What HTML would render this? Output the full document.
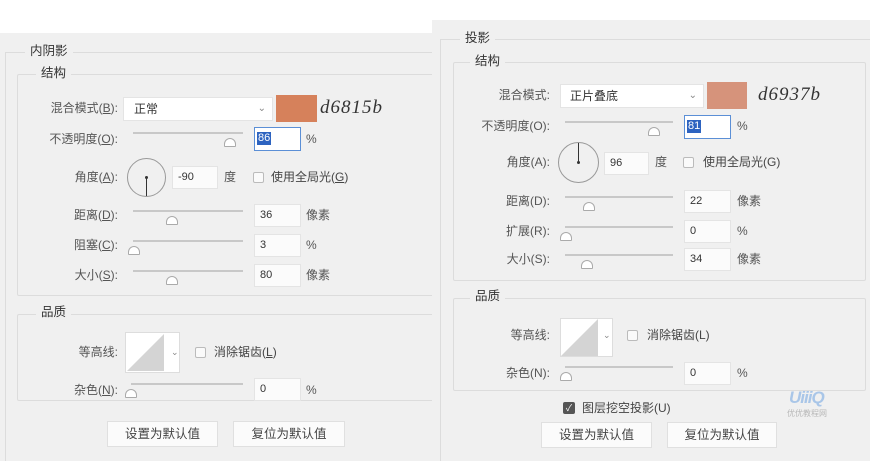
<!DOCTYPE html>
<html style="overflow:hidden;width:870px;height:461px"><head><meta charset="utf-8"><style>
body{margin:0;width:870px;height:461px;background:#fff;position:relative;overflow:hidden;font-family:"Liberation Sans","Noto Sans CJK SC",sans-serif;font-size:12px;color:#444}
div,span{position:absolute;box-sizing:border-box}
.p{background:#f0f0f0}
.fs{border:1px solid #dcdcdc;border-radius:2px}
.lg{background:#f0f0f0;padding:0 5px;color:#333;font-size:12.5px;line-height:16px}
.lb{text-align:right;line-height:16px;white-space:nowrap;color:#555}
.t{line-height:16px;white-space:nowrap;color:#555}
.in{background:#fbfbfb;border:1px solid #e4e4e4;font-size:11px;line-height:20px;padding-left:5px;color:#333}
.sl{height:2px;background:#c8c8c8}
.th{width:0;height:0}
.th::before{content:"";position:absolute;left:-6px;top:0;width:12px;height:9px;background:#fff;border:1px solid #aaa;border-radius:6px 6px 1px 1px;box-sizing:border-box}
.cb{width:11px;height:11px;border:1px solid #bbb;background:#fafafa;border-radius:2px}
.btn{background:#fbfbfb;border:1px solid #e0e0e0;text-align:center;line-height:24px;color:#444;font-size:12.5px}
.hw{font-family:"Liberation Serif",serif;font-style:italic;font-size:19px;color:#333;letter-spacing:1px}
</style></head><body>
<!-- left panel -->
<div class="p" style="left:0;top:33px;width:437px;height:428px"></div>
<div style="left:5px;top:52px;width:432px;height:409px;border-left:1px solid #dcdcdc;border-top:1px solid #dcdcdc"></div>
<div class="lg" style="left:25px;top:43px">内阴影</div>
<div class="fs" style="left:17px;top:74px;width:418px;height:222px"></div>
<div class="lg" style="left:36px;top:65px">结构</div>

<div class="lb" style="right:752px;top:100px">混合模式(<u>B</u>):</div>
<div class="in" style="left:123px;top:97px;width:150px;height:24px;background:#fff;font-size:12px;padding-left:10px;line-height:22px">正常<span style="right:6px;top:0;color:#888;font-size:10px">⌄</span></div>
<div style="left:276px;top:95px;width:41px;height:27px;background:#d6815b"></div>
<div class="hw" style="left:320px;top:97px">d6815b</div>

<div class="lb" style="right:752px;top:131px">不透明度(<u>O</u>):</div>
<div class="sl" style="left:133px;top:132px;width:110px"></div><div class="th" style="left:230px;top:138px"></div>
<div class="in" style="left:254px;top:127px;width:47px;height:24px;border:1px solid #5b8fd6;background:#fff"><span style="left:2px;top:4px;background:#2d63c0;color:#fff;line-height:13px;padding:0 1px">86</span></div>
<div class="t" style="left:306px;top:131px">%</div>

<div class="lb" style="right:752px;top:169px">角度(<u>A</u>):</div>
<div style="left:127px;top:158px;width:39px;height:39px;border:1px solid #999;border-radius:50%"></div>
<div style="left:145px;top:176px;width:3px;height:3px;background:#333;border-radius:50%"></div>
<div style="left:146px;top:177px;width:1px;height:19px;background:#333"></div>
<div class="in" style="left:172px;top:166px;width:46px;height:23px">-90</div>
<div class="t" style="left:224px;top:169px">度</div>
<div class="cb" style="left:253px;top:172px"></div>
<div class="t" style="left:271px;top:169px;color:#444">使用全局光(<u>G</u>)</div>

<div class="lb" style="right:752px;top:207px">距离(<u>D</u>):</div>
<div class="sl" style="left:133px;top:210px;width:110px"></div><div class="th" style="left:172px;top:216px"></div>
<div class="in" style="left:254px;top:204px;width:47px;height:23px">36</div>
<div class="t" style="left:306px;top:207px">像素</div>

<div class="lb" style="right:752px;top:237px">阻塞(<u>C</u>):</div>
<div class="sl" style="left:133px;top:240px;width:110px"></div><div class="th" style="left:134px;top:246px"></div>
<div class="in" style="left:254px;top:234px;width:47px;height:23px">3</div>
<div class="t" style="left:306px;top:237px">%</div>

<div class="lb" style="right:752px;top:267px">大小(<u>S</u>):</div>
<div class="sl" style="left:133px;top:270px;width:110px"></div><div class="th" style="left:172px;top:276px"></div>
<div class="in" style="left:254px;top:264px;width:47px;height:23px">80</div>
<div class="t" style="left:306px;top:267px">像素</div>

<div class="fs" style="left:17px;top:314px;width:418px;height:87px"></div>
<div class="lg" style="left:36px;top:304px">品质</div>
<div class="lb" style="right:752px;top:344px">等高线:</div>
<div style="left:125px;top:332px;width:55px;height:41px;background:#fff;border:1px solid #ddd"></div>
<svg style="position:absolute;left:127px;top:334px" width="42" height="37"><polygon points="0,37 37,0 37,37" fill="#d4d4d4"/></svg>
<div class="t" style="left:171px;top:344px;font-size:9px;color:#888">⌄</div>
<div class="cb" style="left:195px;top:347px"></div>
<div class="t" style="left:214px;top:344px;color:#444">消除锯齿(<u>L</u>)</div>
<div class="lb" style="right:752px;top:382px">杂色(<u>N</u>):</div>
<div class="sl" style="left:131px;top:383px;width:112px"></div><div class="th" style="left:131px;top:389px"></div>
<div class="in" style="left:254px;top:378px;width:47px;height:23px">0</div>
<div class="t" style="left:306px;top:382px">%</div>
<div class="btn" style="left:107px;top:421px;width:111px;height:26px">设置为默认值</div>
<div class="btn" style="left:233px;top:421px;width:112px;height:26px">复位为默认值</div>

<!-- right panel -->
<div class="p" style="left:432px;top:20px;width:438px;height:441px"></div>
<div style="left:440px;top:39px;width:430px;height:422px;border-left:1px solid #dcdcdc;border-top:1px solid #dcdcdc"></div>
<div class="lg" style="left:460px;top:30px">投影</div>
<div class="fs" style="left:453px;top:62px;width:413px;height:219px"></div>
<div class="lg" style="left:470px;top:53px">结构</div>

<div class="lb" style="right:320px;top:87px">混合模式:</div>
<div class="in" style="left:560px;top:84px;width:144px;height:24px;background:#fff;font-size:12px;padding-left:9px;line-height:22px">正片叠底<span style="right:6px;top:0;color:#888;font-size:10px">⌄</span></div>
<div style="left:707px;top:82px;width:40px;height:27px;background:#d6937b"></div>
<div class="hw" style="left:758px;top:84px">d6937b</div>

<div class="lb" style="right:320px;top:118px">不透明度(O):</div>
<div class="sl" style="left:565px;top:121px;width:108px"></div><div class="th" style="left:654px;top:127px"></div>
<div class="in" style="left:684px;top:115px;width:47px;height:24px;border:1px solid #5b8fd6;background:#fff"><span style="left:2px;top:4px;background:#2d63c0;color:#fff;line-height:13px;padding:0 1px">81</span></div>
<div class="t" style="left:737px;top:118px">%</div>

<div class="lb" style="right:320px;top:154px">角度(A):</div>
<div style="left:558px;top:142px;width:41px;height:41px;border:1px solid #999;border-radius:50%"></div>
<div style="left:577px;top:161px;width:3px;height:3px;background:#333;border-radius:50%"></div>
<div style="left:578px;top:143px;width:1px;height:19px;background:#333"></div>
<div class="in" style="left:604px;top:152px;width:45px;height:23px">96</div>
<div class="t" style="left:655px;top:154px">度</div>
<div class="cb" style="left:683px;top:157px"></div>
<div class="t" style="left:703px;top:154px;color:#444">使用全局光(G)</div>

<div class="lb" style="right:320px;top:193px">距离(D):</div>
<div class="sl" style="left:565px;top:196px;width:108px"></div><div class="th" style="left:589px;top:202px"></div>
<div class="in" style="left:684px;top:190px;width:47px;height:23px">22</div>
<div class="t" style="left:737px;top:193px">像素</div>

<div class="lb" style="right:320px;top:223px">扩展(R):</div>
<div class="sl" style="left:565px;top:226px;width:108px"></div><div class="th" style="left:566px;top:232px"></div>
<div class="in" style="left:684px;top:220px;width:47px;height:23px">0</div>
<div class="t" style="left:737px;top:223px">%</div>

<div class="lb" style="right:320px;top:251px">大小(S):</div>
<div class="sl" style="left:565px;top:254px;width:108px"></div><div class="th" style="left:587px;top:260px"></div>
<div class="in" style="left:684px;top:248px;width:47px;height:23px">34</div>
<div class="t" style="left:737px;top:251px">像素</div>

<div class="fs" style="left:453px;top:298px;width:413px;height:93px"></div>
<div class="lg" style="left:470px;top:288px">品质</div>
<div class="lb" style="right:320px;top:327px">等高线:</div>
<div style="left:560px;top:318px;width:53px;height:39px;background:#fff;border:1px solid #ddd"></div>
<svg style="position:absolute;left:561px;top:319px" width="40" height="37"><polygon points="0,37 37,0 37,37" fill="#d4d4d4"/></svg>
<div class="t" style="left:603px;top:327px;font-size:9px;color:#888">⌄</div>
<div class="cb" style="left:627px;top:330px"></div>
<div class="t" style="left:647px;top:327px;color:#444">消除锯齿(L)</div>
<div class="lb" style="right:320px;top:365px">杂色(N):</div>
<div class="sl" style="left:565px;top:366px;width:108px"></div><div class="th" style="left:566px;top:372px"></div>
<div class="in" style="left:684px;top:362px;width:47px;height:23px">0</div>
<div class="t" style="left:737px;top:365px">%</div>

<div style="left:563px;top:402px;width:12px;height:12px;background:#555;border-radius:2px;color:#fff;font-size:9px;line-height:12px;text-align:center">✓</div>
<div class="t" style="left:582px;top:400px;color:#444">图层挖空投影(U)</div>
<div class="btn" style="left:541px;top:422px;width:111px;height:26px">设置为默认值</div>
<div class="btn" style="left:667px;top:422px;width:110px;height:26px">复位为默认值</div>

<div style="left:789px;top:388px;font-weight:bold;font-size:17px;color:#a9c6e8;font-style:italic;letter-spacing:-1px">UiiiQ</div>
<div style="left:787px;top:408px;font-size:8px;color:#b8b8b8">优优教程网</div>
</body></html>
